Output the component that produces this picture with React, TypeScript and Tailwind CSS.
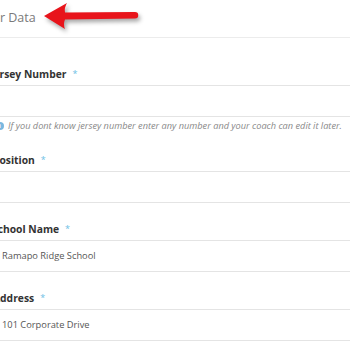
const fields = [
  { label: "Jersey Number", value: "", shift: "-ml-[10px]", hint: true },
  { label: "Position", value: "", shift: "-ml-[7px]", hint: false },
  { label: "School Name", value: "Ramapo Ridge School", shift: "-ml-[8px]", hint: false },
  { label: "Address", value: "101 Corporate Drive", shift: "-ml-[7px]", hint: false },
];

function Arrow() {
  return (
    <svg
      width="100"
      height="34"
      viewBox="0 0 100 34"
      className="ml-[5px] -mt-[4px] drop-shadow-[2px_3px_2px_rgba(0,0,0,0.35)]"
    >
      <path
        d="M3 16 L26 3 Q23 8 24 12.5 L94 12 A3.2 3.2 0 0 1 94 18.5 L24 19.5 Q22 24 24 29 Z"
        fill="#e8141b"
      />
    </svg>
  );
}

export default function App() {
  return (
    <div className="h-[350px] w-[350px] overflow-hidden bg-white font-['Open_Sans',sans-serif]">
      <div className="flex h-[38px] items-center border-b border-[#ececec]">
        <span className="-ml-[31px] whitespace-nowrap text-[12.5px] text-[#7a7a7a]">Player Data</span>
        <Arrow />
      </div>

      <div className="flex flex-col pt-[28px]">
        {fields.map((f) => (
          <div key={f.label} className="mb-[18px] flex flex-col">
            <div className={`flex items-center whitespace-nowrap ${f.shift}`}>
              <span className="text-[10.3px] font-bold leading-4 text-[#333]">{f.label}</span>
              <span className="ml-[6px] text-[9px] leading-4 text-[#6cc0e5]">*</span>
            </div>
            <div className="mt-[3px] flex h-[32px] items-center border-y border-[#e4e4e4] pl-[2px] text-[9.3px] text-[#555]">
              {f.value}
            </div>
            {f.hint && (
              <div className="-ml-[4px] mt-[3px] mb-[2px] flex items-center gap-[4px] whitespace-nowrap">
                <span className="flex h-[8px] w-[8px] items-center justify-center rounded-full bg-[#7ab8e0] text-[6px] font-bold leading-none text-white">
                  i
                </span>
                <span className="text-[9.2px] italic leading-3 text-[#888]">
                  If you dont know jersey number enter any number and your coach can edit it later.
                </span>
              </div>
            )}
          </div>
        ))}
      </div>
    </div>
  );
}
